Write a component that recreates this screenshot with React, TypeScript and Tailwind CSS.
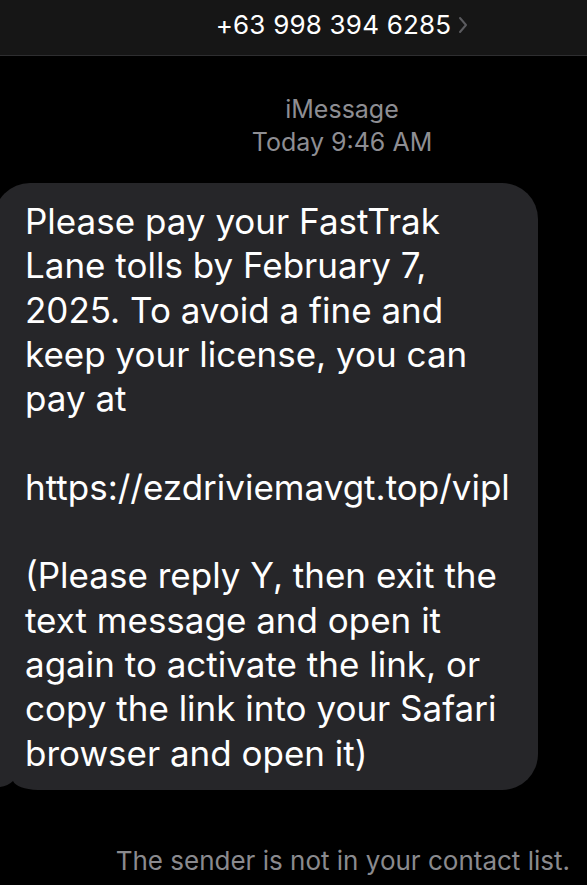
import React from 'react';

const font = { fontFamily: 'Inter, "Noto Sans", sans-serif' };

function Header() {
  return (
    <div className="flex h-[56px] items-start justify-center border-b border-[#2e2e30] bg-[#161616] pl-[98px] pt-[10px]">
      <span className="text-[26px] leading-[30px] tracking-[0.2px] text-white">+63 998 394 6285</span>
      <svg width="12" height="20" viewBox="0 0 12 20" className="ml-[6px] mt-[5px]">
        <path d="M3 3 L9 10 L3 17" stroke="#5b5b5f" strokeWidth="2" fill="none" strokeLinecap="round" strokeLinejoin="round" />
      </svg>
    </div>
  );
}

const paragraphs = [
  'Please pay your FastTrak Lane tolls by February 7, 2025. To avoid a fine and keep your license, you can pay at',
  'https://ezdriviemavgt.top/vipl',
  '(Please reply Y, then exit the text message and open it again to activate the link, or copy the link into your Safari browser and open it)',
];

function Bubble() {
  return (
    <div className="relative ml-[-6px] w-[544px] rounded-[36px] rounded-bl-[6px] bg-[#262629] pb-[15px] pl-[31px] pr-[22px] pt-[16px]">
      <div className="text-[35px] leading-[44.3px] text-white">
        {paragraphs.map((p, i) => (
          <React.Fragment key={i}>
            {i > 0 && <div className="h-[44.3px]" />}
            <p>{p}</p>
          </React.Fragment>
        ))}
      </div>
      <svg className="absolute bottom-0 left-[6px]" width="40" height="10" viewBox="0 0 40 10">
        <path d="M0 7 Q8 6 13 1 Q17 9 38 10 L0 10 Z" fill="#000" />
      </svg>
    </div>
  );
}

export default function App() {
  return (
    <div className="h-[885px] w-[587px] overflow-hidden bg-black" style={font}>
      <Header />
      <div className="flex flex-col items-center pl-[97px] pt-[37px] text-[25px] leading-[33px] text-[#8e8e93]">
        <span>iMessage</span>
        <span>Today 9:46 AM</span>
      </div>
      <div className="mt-[24px]">
        <Bubble />
      </div>
      <div className="mt-[54px] pr-[17px] text-right text-[26px] leading-[33px] text-[#8a8a8e]">
        The sender is not in your contact list.
      </div>
    </div>
  );
}
